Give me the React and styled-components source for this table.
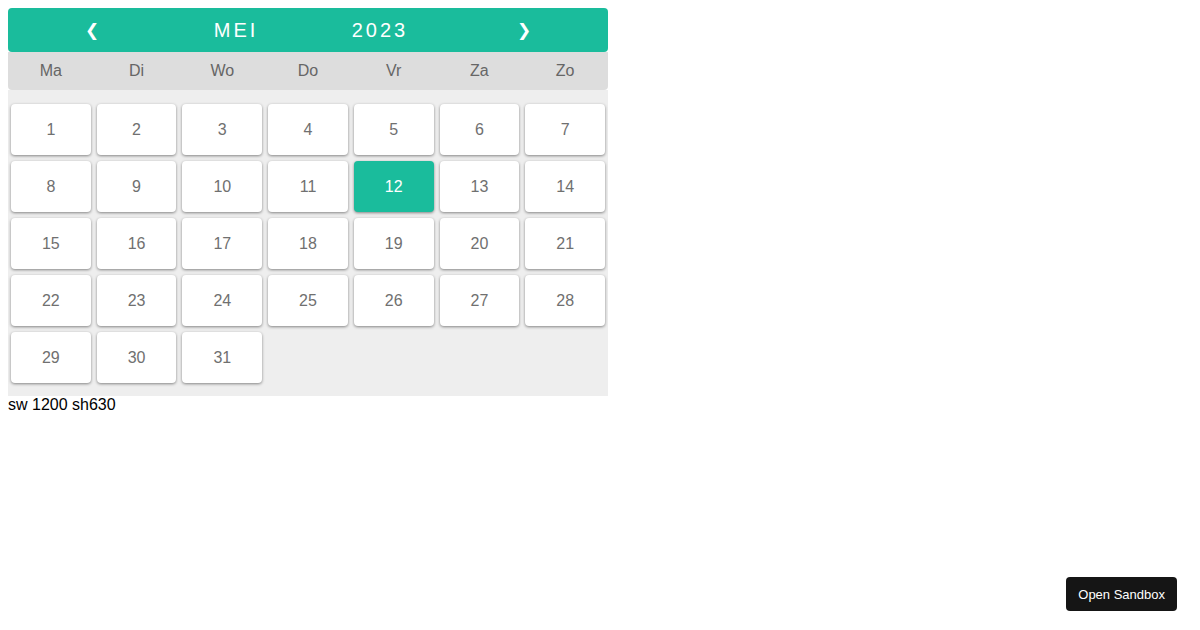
import styled, { createGlobalStyle } from "styled-components";

const GlobalStyle = createGlobalStyle`
  body {
    margin: 8px;
    font-family: "Liberation Sans", Arial, sans-serif;
    background: #fff;
  }
`;

const dagen = ["Ma", "Di", "Wo", "Do", "Vr", "Za", "Zo"];
const nummers = Array.from({ length: 31 }, (_, i) => i + 1);

export default function App() {
  return (
    <>
      <GlobalStyle />
      <Kalender>
        <Kop>
          <Pijl>&#10094;</Pijl>
          <KopTekst>MEI</KopTekst>
          <KopTekst>2023</KopTekst>
          <Pijl>&#10095;</Pijl>
        </Kop>
        <Weekdagen>
          {dagen.map((d) => (
            <Weekdag key={d}>{d}</Weekdag>
          ))}
        </Weekdagen>
        <Dagen>
          {nummers.map((n) => (
            <Dag key={n} $actief={n === 12}>
              {n}
            </Dag>
          ))}
        </Dagen>
      </Kalender>
      <Info>sw 1200 sh630</Info>
      <SandboxKnop>Open Sandbox</SandboxKnop>
    </>
  );
}

const Kalender = styled.div`
  width: 600px;
`;

const Kop = styled.div`
  height: 44px;
  padding: 0 12px;
  background: #1abc9c;
  border-radius: 4px;
  color: #fff;
  display: grid;
  grid-template-columns: repeat(4, 1fr);
  align-items: center;
  text-align: center;
`;

const KopTekst = styled.span`
  font-size: 20px;
  letter-spacing: 3px;
`;

const Pijl = styled.span`
  font-family: "DejaVu Sans", sans-serif;
  font-size: 17px;
  font-weight: bold;
  cursor: pointer;
`;

const Weekdagen = styled.div`
  height: 38px;
  background: #ddd;
  border-radius: 0 0 4px 4px;
  display: grid;
  grid-template-columns: repeat(7, 1fr);
  align-items: center;
  text-align: center;
`;

const Weekdag = styled.span`
  color: #666;
  font-size: 16px;
`;

const Dagen = styled.div`
  background: #eee;
  padding: 11px 0 10px;
  display: grid;
  grid-template-columns: repeat(7, 1fr);
`;

const Dag = styled.div`
  margin: 3px;
  height: 51px;
  border-radius: 4px;
  background: ${({ $actief }) => ($actief ? "#1abc9c" : "#fff")};
  color: ${({ $actief }) => ($actief ? "#fff" : "#707070")};
  box-shadow: 0 1px 3px rgba(0, 0, 0, 0.45);
  display: flex;
  align-items: center;
  justify-content: center;
  font-size: 16px;
`;

const Info = styled.div`
  font-size: 16px;
  color: #000;
`;

const SandboxKnop = styled.button`
  position: fixed;
  right: 23px;
  bottom: 19px;
  height: 34px;
  padding: 0 12px;
  border: none;
  border-radius: 4px;
  background: #151515;
  color: #fff;
  font-family: "Liberation Sans", Arial, sans-serif;
  font-size: 13px;
`;
